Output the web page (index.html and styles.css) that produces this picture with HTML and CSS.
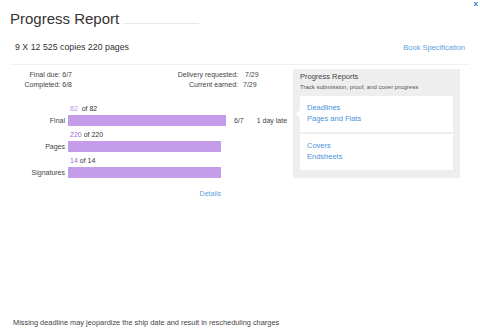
FILE: index.html
```html
<!DOCTYPE html>
<html>
<head>
<meta charset="utf-8">
<link rel="stylesheet" href="styles.css">
</head>
<body>
<div class="page">
  <a class="close">x</a>
  <div class="title-row">
    <h1 class="title">Progress Report</h1>
    <span class="title-rule"></span>
  </div>
  <div class="spec-row">
    <span class="spec">9 X 12 525 copies 220 pages</span>
    <a class="link spec-link">Book Specification</a>
  </div>
  <div class="divider"></div>
  <div class="main">
    <div class="left">
      <div class="stats">
        <div class="stats-a">
          <div>Final due: 6/7</div>
          <div>Completed: 6/8</div>
        </div>
        <div class="stats-b">
          <span class="lbl">Delivery requested:</span><span>7/29</span>
          <span class="lbl">Current earned:</span><span class="val2">7/29</span>
        </div>
      </div>
      <div class="bars">
        <div class="bar-row">
          <span></span>
          <div class="count"><span class="num num-light">82</span>&nbsp; of 82</div>
          <span class="bar-label">Final</span>
          <div class="bar-line">
            <div class="bar" style="width:158px"></div>
            <span class="due">6/7</span>
            <span class="late">1 day late</span>
          </div>
        </div>
        <div class="bar-row">
          <span></span>
          <div class="count"><span class="num">220</span> of 220</div>
          <span class="bar-label">Pages</span>
          <div class="bar-line"><div class="bar" style="width:153px"></div></div>
        </div>
        <div class="bar-row">
          <span></span>
          <div class="count"><span class="num">14</span> of 14</div>
          <span class="bar-label">Signatures</span>
          <div class="bar-line"><div class="bar" style="width:153px"></div></div>
        </div>
      </div>
      <div class="details-row"><a class="link details">Details</a></div>
    </div>
    <div class="panel">
      <div class="panel-title">Progress Reports</div>
      <div class="panel-sub">Track submission, proof, and cover progress</div>
      <div class="card card-active">
        <a class="link card-link">Deadlines</a>
        <a class="link card-link">Pages and Flats</a>
      </div>
      <div class="card">
        <a class="link card-link">Covers</a>
        <a class="link card-link">Endsheets</a>
      </div>
    </div>
  </div>
  <div class="footer">Missing deadline may jeopardize the ship date and result in rescheduling charges</div>
</div>
</body>
</html>
```
FILE: styles.css
```css
* { box-sizing: border-box; }
html, body { margin: 0; padding: 0; background: #fff; }
body { font-family: "Liberation Sans", Arial, sans-serif; color: #444; }
.page {
  position: relative;
  width: 480px;
  height: 334px;
  padding: 0 10px;
  display: flex;
  flex-direction: column;
  overflow: hidden;
}
.link { color: #4a93dc; text-decoration: none; cursor: pointer; }
.close {
  position: absolute;
  top: 0;
  right: 2px;
  color: #2f7fcf;
  font-weight: bold;
  font-size: 8px;
  line-height: 8px;
}
.title-row {
  display: flex;
  align-items: flex-end;
  padding-top: 10px;
}
.title {
  margin: 0;
  font-size: 15px;
  line-height: 17px;
  font-weight: normal;
  color: #333;
}
.title-rule {
  width: 76px;
  margin-left: 4px;
  margin-bottom: 3px;
  border-bottom: 1px solid #e8e8e8;
}
.spec-row {
  display: flex;
  justify-content: space-between;
  align-items: center;
  margin-top: 15px;
  padding: 0 5px;
  height: 11px;
}
.spec { font-size: 8.8px; line-height: 11px; color: #333; }
.spec-link { font-size: 7.5px; line-height: 11px; color: #5a9fe2; }
.divider {
  margin-top: 11px;
  border-top: 1px solid #f0f0f0;
}
.main {
  display: flex;
  margin-top: 4px;
}
.left {
  width: 283px;
  font-size: 7px;
  line-height: 10px;
}
.stats {
  display: flex;
  padding-top: 1px;
}
.stats-a {
  width: 62px;
  text-align: right;
}
.stats-b {
  margin-left: 88px;
  display: grid;
  grid-template-columns: 78px auto;
  column-gap: 7px;
}
.stats-b .lbl { text-align: right; }
.val2 { margin-left: -2px; }
.bars {
  margin-top: 14px;
  display: flex;
  flex-direction: column;
  gap: 4px;
}
.bar-row {
  display: grid;
  grid-template-columns: 55px auto;
  column-gap: 3px;
  align-items: center;
}
.count { padding-left: 2px; color: #333; margin-bottom: 1px; }
.num { color: #9a6ad6; }
.num-light { color: #b596e6; }
.bar-label { text-align: right; color: #444; }
.bar-line {
  display: flex;
  align-items: center;
}
.bar {
  height: 11px;
  background: #c49ce9;
}
.due { margin-left: 8px; }
.late { margin-left: 13px; }
.details-row {
  margin-top: 11px;
  width: 211px;
  text-align: right;
}
.details { color: #5a9fe2; }
.panel {
  width: 167px;
  height: 109px;
  background: #eeeeee;
  padding: 3px 7px 7px 7px;
}
.panel-title {
  font-size: 7.5px;
  line-height: 10px;
  color: #444;
}
.panel-sub {
  font-size: 6px;
  line-height: 8px;
  color: #555;
  margin-top: 1px;
}
.card {
  position: relative;
  background: #fff;
  height: 36px;
  padding: 6px 7px 0 7px;
  display: flex;
  flex-direction: column;
  margin-top: 2px;
}
.card-active {
  margin-top: 5px;
}
.card-active::before {
  content: "";
  position: absolute;
  left: -4px;
  top: 14px;
  border-top: 4px solid transparent;
  border-bottom: 4px solid transparent;
  border-right: 4px solid #fff;
}
.card-link {
  font-size: 7.5px;
  line-height: 11px;
}
.footer {
  margin-top: auto;
  padding: 0 0 6px 3px;
  font-size: 7.4px;
  line-height: 10px;
  color: #444;
}
```
